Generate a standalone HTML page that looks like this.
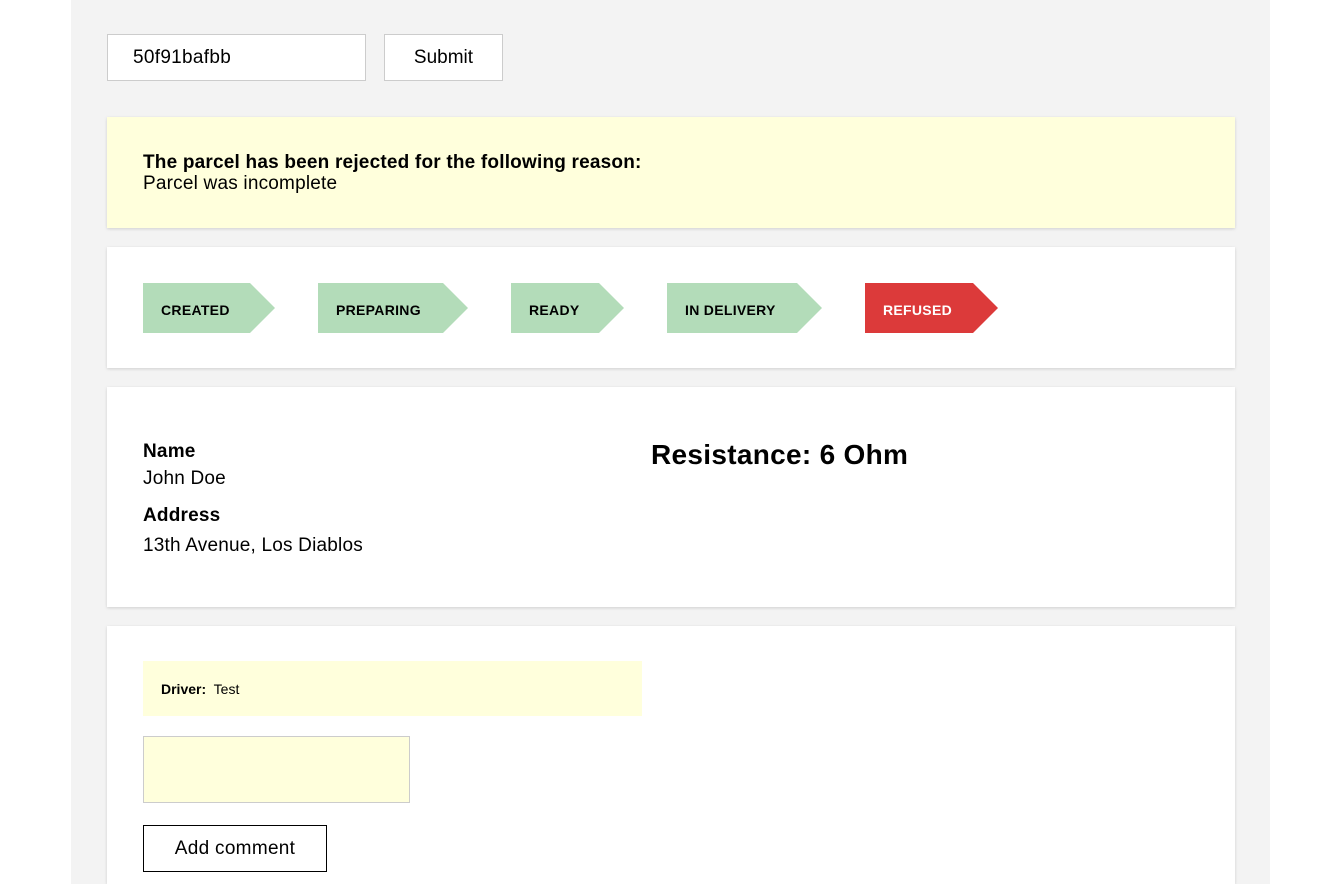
<!DOCTYPE html><html><head><style>
html,body{margin:0;height:884px;overflow:hidden;}
body{background:#fff;font-family:"Liberation Sans",sans-serif;color:#000;}
.wrap{position:absolute;left:71px;top:0;width:1199px;height:884px;background:#f3f3f3;}
.a{position:absolute;white-space:nowrap;}
.card{position:absolute;left:107px;width:1128px;background:#fff;box-shadow:0 1px 3px rgba(0,0,0,.15);}
.st{position:absolute;top:283px;height:50px;font-size:14px;font-weight:bold;line-height:50px;white-space:nowrap;}
.st span{position:absolute;left:18px;top:2px;letter-spacing:0.3px;}
</style></head><body>
<div class="wrap"></div>
<div class="a" style="left:107px;top:34px;width:257px;height:45px;border:1px solid #ccc;background:#fff;font-size:19px;line-height:45px;"><span style="margin-left:25px;letter-spacing:0.3px">50f91bafbb</span></div>
<div class="a" style="left:384px;top:34px;width:117px;height:45px;border:1px solid #ccc;background:#fff;font-size:19px;line-height:45px;text-align:center;">Submit</div>
<div class="card" style="top:117px;height:111px;background:#ffffdc;">
<div class="a" style="left:36px;top:35px;font-size:19px;line-height:21px;letter-spacing:0.2px;"><b>The parcel has been rejected for the following reason:</b><br>Parcel was incomplete</div></div>
<div class="card" style="top:247px;height:121px;"></div>
<svg class="a" style="left:0;top:0" width="1344" height="400">
<polygon points="143,283 250,283 275,308 250,333 143,333" fill="#b3dcb9"/>
<polygon points="318,283 443,283 468,308 443,333 318,333" fill="#b3dcb9"/>
<polygon points="511,283 599,283 624,308 599,333 511,333" fill="#b3dcb9"/>
<polygon points="667,283 797,283 822,308 797,333 667,333" fill="#b3dcb9"/>
<polygon points="865,283 973,283 998,308 973,333 865,333" fill="#dc3a3a"/>
</svg>
<div class="st" style="left:143px"><span>CREATED</span></div>
<div class="st" style="left:318px"><span>PREPARING</span></div>
<div class="st" style="left:511px"><span>READY</span></div>
<div class="st" style="left:667px"><span>IN DELIVERY</span></div>
<div class="st" style="left:865px;color:#fff"><span>REFUSED</span></div>
<div class="card" style="top:387px;height:220px;">
<div class="a" style="left:36px;top:51px;font-size:19px;line-height:27px;letter-spacing:0.2px;"><b>Name</b><br>John Doe</div>
<div class="a" style="left:36px;top:114px;font-size:19px;line-height:30px;letter-spacing:0.2px;"><b>Address</b><br>13th Avenue, Los Diablos</div>
<div class="a" style="left:544px;top:52px;font-size:28px;font-weight:bold;letter-spacing:0.3px;">Resistance: 6 Ohm</div>
</div>
<div class="card" style="top:626px;height:258px;">
<div class="a" style="left:36px;top:35px;width:499px;height:55px;background:#ffffdc;font-size:14px;line-height:57px;"><span style="margin-left:18px"><b>Driver:</b>&nbsp; Test</span></div>
<div class="a" style="left:36px;top:110px;width:265px;height:65px;border:1px solid #ccc;background:#ffffdc;"></div>
<div class="a" style="left:36px;top:199px;width:182px;height:45px;border:1px solid #000;font-size:19px;line-height:45px;text-align:center;letter-spacing:0.3px;">Add comment</div>
</div>
</body></html>
